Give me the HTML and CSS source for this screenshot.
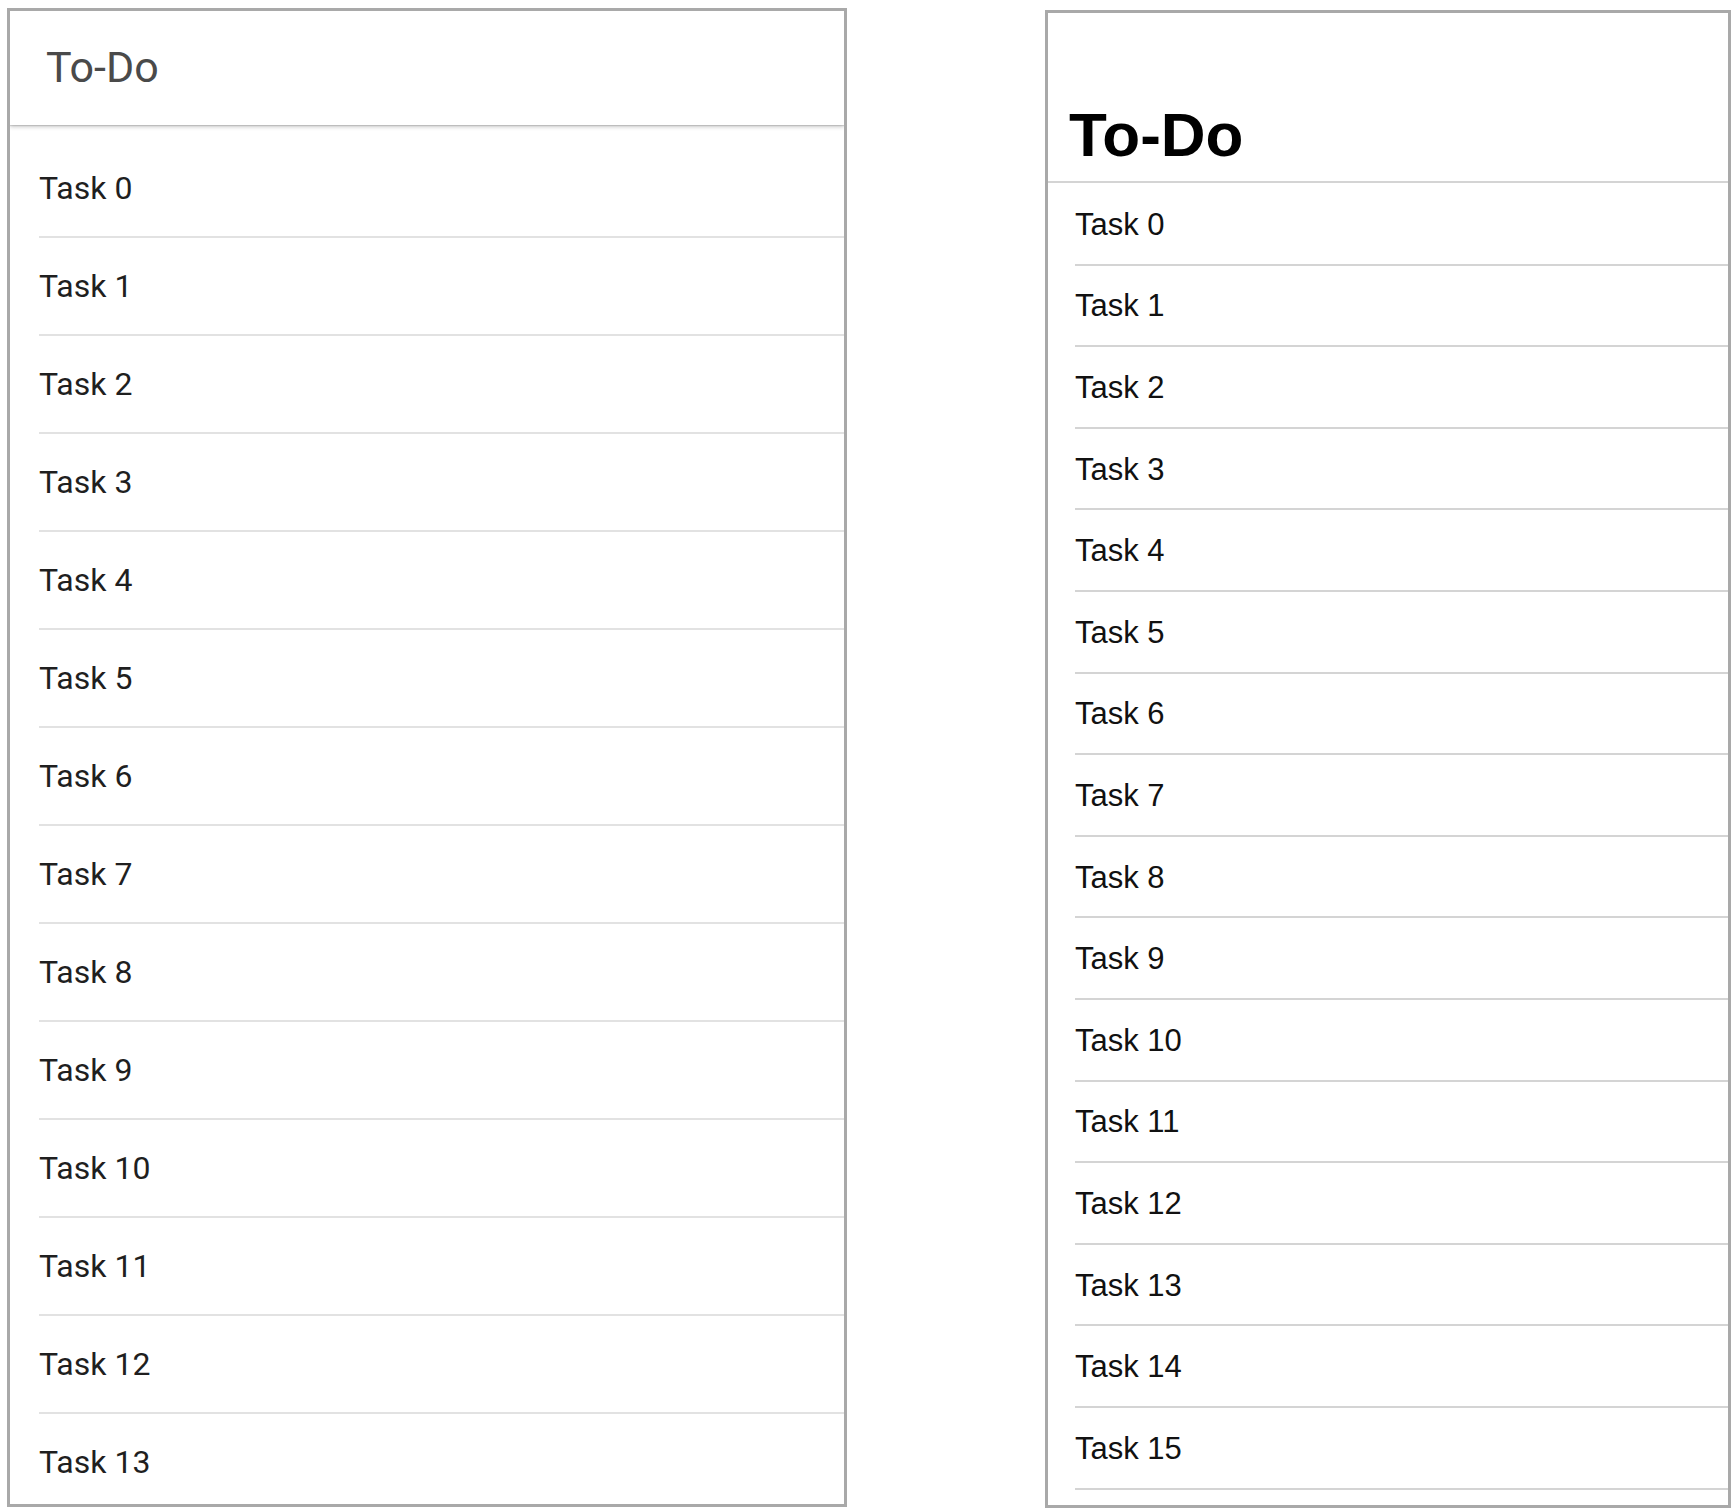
FILE: index.html
```html
<!DOCTYPE html>
<html lang="en">
<head>
<meta charset="utf-8">
<title>To-Do</title>
<link rel="stylesheet" href="styles.css">
</head>
<body>
<div class="page">
  <section class="panel panel-material">
    <header class="m-header"><span class="m-title">To-Do</span></header>
    <ul class="m-list">
      <li class="m-item">Task 0</li>
      <li class="m-item">Task 1</li>
      <li class="m-item">Task 2</li>
      <li class="m-item">Task 3</li>
      <li class="m-item">Task 4</li>
      <li class="m-item">Task 5</li>
      <li class="m-item">Task 6</li>
      <li class="m-item">Task 7</li>
      <li class="m-item">Task 8</li>
      <li class="m-item">Task 9</li>
      <li class="m-item">Task 10</li>
      <li class="m-item">Task 11</li>
      <li class="m-item">Task 12</li>
      <li class="m-item">Task 13</li>
    </ul>
  </section>
  <section class="panel panel-plain">
    <div class="p-header"><h1 class="p-title">To-Do</h1></div>
    <ul class="p-list">
      <li class="p-item">Task 0</li>
      <li class="p-item">Task 1</li>
      <li class="p-item">Task 2</li>
      <li class="p-item">Task 3</li>
      <li class="p-item">Task 4</li>
      <li class="p-item">Task 5</li>
      <li class="p-item">Task 6</li>
      <li class="p-item">Task 7</li>
      <li class="p-item">Task 8</li>
      <li class="p-item">Task 9</li>
      <li class="p-item">Task 10</li>
      <li class="p-item">Task 11</li>
      <li class="p-item">Task 12</li>
      <li class="p-item">Task 13</li>
      <li class="p-item">Task 14</li>
      <li class="p-item">Task 15</li>
    </ul>
  </section>
</div>
</body>
</html>
```

FILE: styles.css
```css
* {
  box-sizing: border-box;
}

html, body {
  margin: 0;
  padding: 0;
  background: #ffffff;
}

.page {
  display: flex;
  align-items: flex-start;
  padding-left: 7px;
}

.panel {
  border: 3px solid #a9a9a9;
  background: #ffffff;
  overflow: hidden;
}

/* ---------- left: material style ---------- */
.panel-material {
  width: 840px;
  height: 1499px;
  margin-top: 8px;
  display: flex;
  flex-direction: column;
}

.m-header {
  position: relative;
  z-index: 1;
  height: 114px;
  flex: none;
  display: flex;
  align-items: center;
  padding-left: 36px;
  padding-bottom: 3px;
  background: #ffffff;
  box-shadow: 0 2px 4px rgba(0, 0, 0, 0.2), 0 1px 1px rgba(0, 0, 0, 0.12);
}

.m-title {
  font-family: Roboto, "Liberation Sans", sans-serif;
  font-size: 43px;
  color: #4a4a4a;
}

.m-list {
  list-style: none;
  margin: 0;
  padding: 15px 0 0 0;
}

.m-item {
  height: 98px;
  margin-left: 29px;
  display: flex;
  align-items: center;
  border-bottom: 2px solid #e2e2e2;
  font-family: Roboto, "Liberation Sans", sans-serif;
  font-size: 32px;
  color: #1f1f1f;
}

/* ---------- right: plain style ---------- */
.panel-plain {
  width: 686px;
  height: 1498px;
  margin-top: 10px;
  margin-left: 198px;
}

.p-header {
  height: 170px;
  display: flex;
  align-items: flex-end;
  padding-left: 21px;
  padding-bottom: 15px;
  border-bottom: 2px solid #d4d4d4;
}

.p-title {
  margin: 0;
  font-family: "Liberation Sans", Arial, sans-serif;
  font-weight: bold;
  font-size: 62px;
  line-height: 1;
  color: #000000;
}

.p-list {
  list-style: none;
  margin: 0;
  padding: 1px 0 0 0;
}

.p-item {
  height: 81.6px;
  margin-left: 27px;
  display: flex;
  align-items: center;
  padding-top: 2px;
  border-bottom: 2px solid #d4d4d4;
  font-family: "Liberation Sans", Arial, sans-serif;
  font-size: 31px;
  color: #111111;
}
```
